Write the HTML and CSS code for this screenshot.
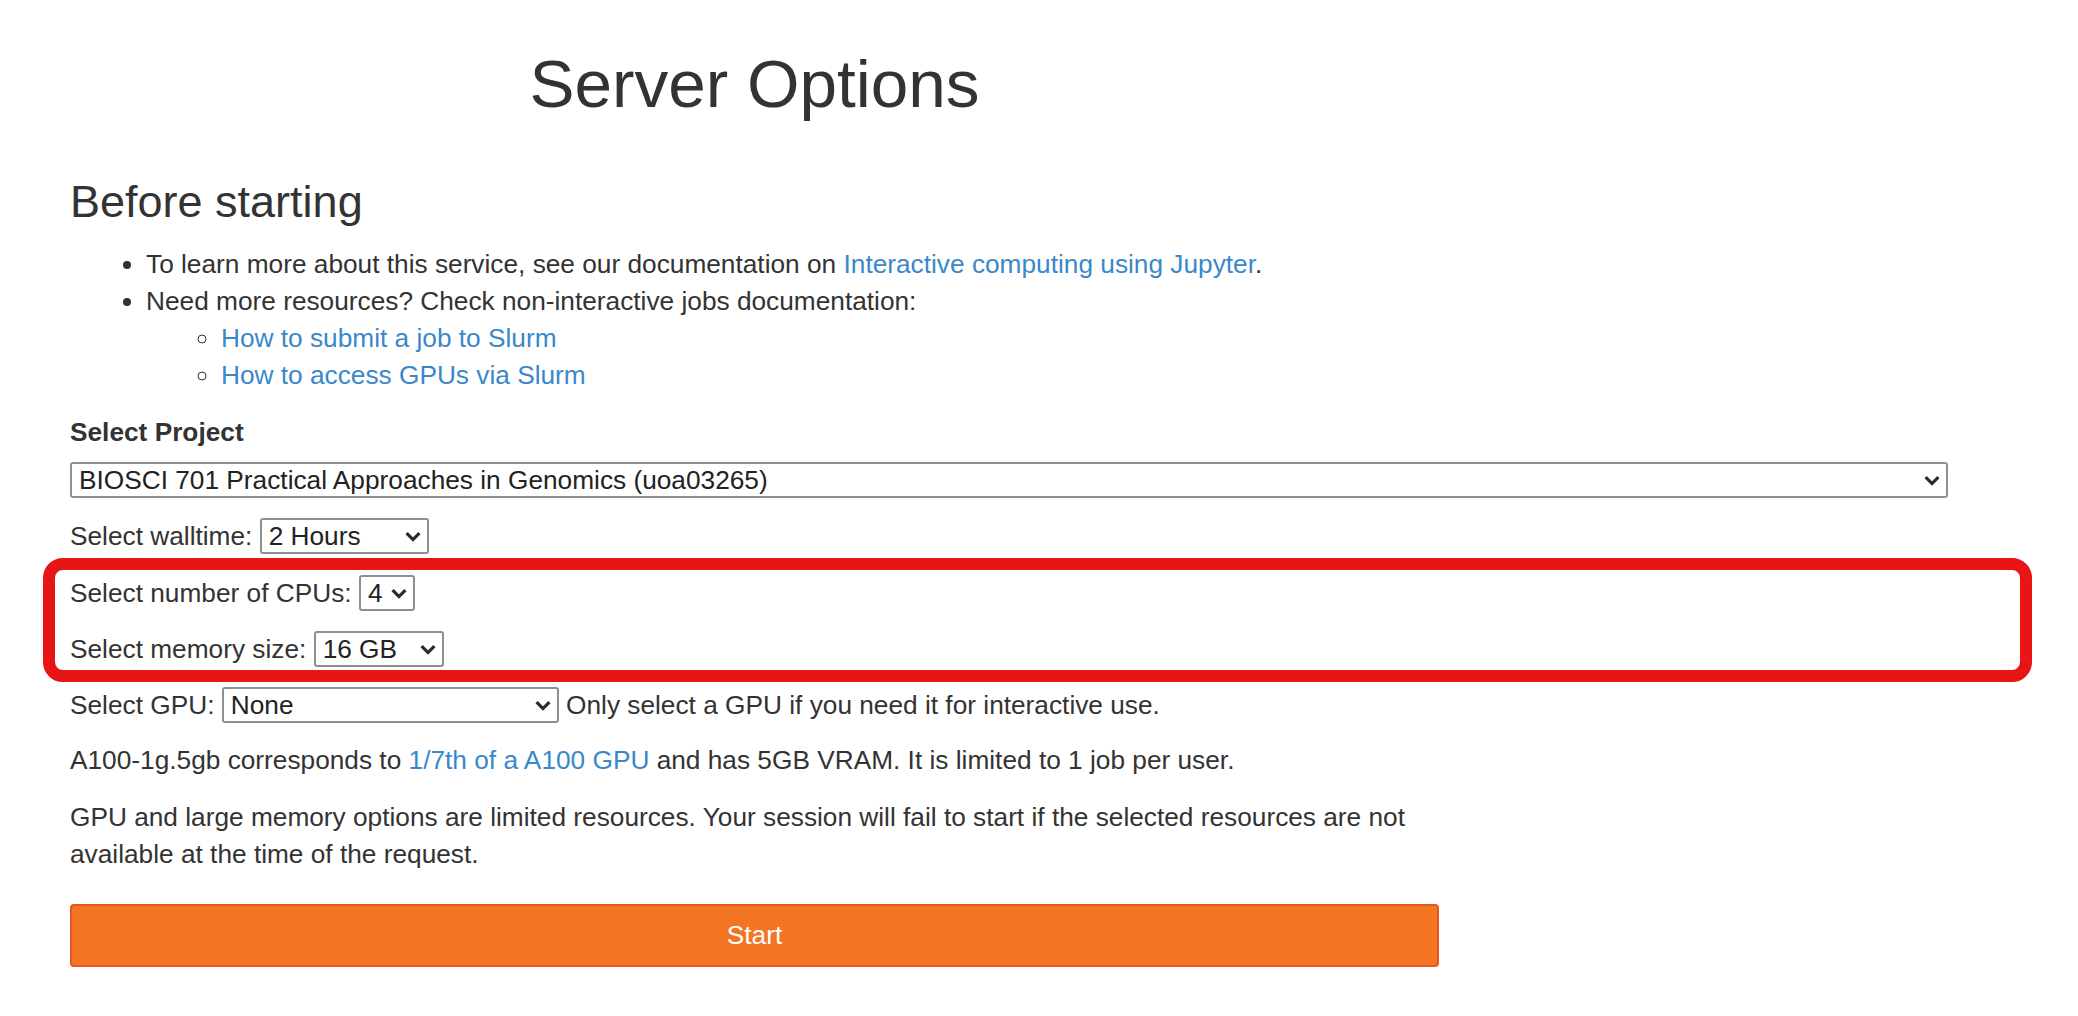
FILE: index.html
```html
<!DOCTYPE html>
<html lang="en">
<head>
<meta charset="utf-8">
<title>Server Options</title>
<link rel="stylesheet" href="styles.css">
</head>
<body>
<div class="page">
  <h1 class="title">Server Options</h1>
  <form class="spawn-form">
    <h3 class="section-title">Before starting</h3>
    <ul class="info-list">
      <li>To learn more about this service, see our documentation on <a href="#">Interactive computing using Jupyter</a>.</li>
      <li>Need more resources? Check non-interactive jobs documentation:
        <ul class="sub-list">
          <li><a href="#">How to submit a job to Slurm</a></li>
          <li><a href="#">How to access GPUs via Slurm</a></li>
        </ul>
      </li>
    </ul>

    <label class="project-label" for="project">Select Project</label>
    <div class="select-wrap sel-project">
      <select id="project"><option>BIOSCI 701 Practical Approaches in Genomics (uoa03265)</option></select>
      <svg class="chev" viewBox="0 0 16 11" width="16" height="11"><path d="M1.6 2.2 L8 8.6 L14.4 2.2"/></svg>
    </div>

    <div class="opt-row">
      <label for="walltime">Select walltime:</label>
      <span class="select-wrap sel-walltime">
        <select id="walltime"><option>2 Hours</option><option>4 Hours</option><option>8 Hours</option></select>
        <svg class="chev" viewBox="0 0 16 11" width="16" height="11"><path d="M1.6 2.2 L8 8.6 L14.4 2.2"/></svg>
      </span>
    </div>

    <div class="highlight-group">
      <div class="opt-row">
        <label for="cpus">Select number of CPUs:</label>
        <span class="select-wrap sel-cpu">
          <select id="cpus"><option>4</option><option>2</option><option>8</option></select>
          <svg class="chev" viewBox="0 0 16 11" width="16" height="11"><path d="M1.6 2.2 L8 8.6 L14.4 2.2"/></svg>
        </span>
      </div>
      <div class="opt-row">
        <label for="mem">Select memory size:</label>
        <span class="select-wrap sel-mem">
          <select id="mem"><option>16 GB</option><option>32 GB</option></select>
          <svg class="chev" viewBox="0 0 16 11" width="16" height="11"><path d="M1.6 2.2 L8 8.6 L14.4 2.2"/></svg>
        </span>
      </div>
      <div class="highlight-box"></div>
    </div>

    <div class="opt-row">
      <label for="gpu">Select GPU:</label>
      <span class="select-wrap sel-gpu">
        <select id="gpu"><option>None</option><option>A100-1g.5gb</option></select>
        <svg class="chev" viewBox="0 0 16 11" width="16" height="11"><path d="M1.6 2.2 L8 8.6 L14.4 2.2"/></svg>
      </span>
      <span class="hint">Only select a GPU if you need it for interactive use.</span>
    </div>

    <p class="note note-first">A100-1g.5gb corresponds to <a href="#">1/7th of a A100 GPU</a> and has 5GB VRAM. It is limited to 1 job per user.</p>
    <p class="note">GPU and large memory options are limited resources. Your session will fail to start if the selected resources are not available at the time of the request.</p>

    <button type="button" class="start-btn">Start</button>
  </form>
</div>
</body>
</html>
```

FILE: styles.css
```css
html, body {
  margin: 0;
  padding: 0;
  background: #ffffff;
}

body {
  font-family: "Liberation Sans", Arial, Helvetica, sans-serif;
  font-size: 26.25px;
  line-height: 37px;
  color: #333333;
}

.page {
  padding-left: 70px;
}

a {
  color: #3a88c9;
  text-decoration: none;
}

.title {
  width: 1369px;
  margin: 47px 0 0;
  text-align: center;
  font-size: 67.5px;
  line-height: 74px;
  font-weight: 500;
  color: #333333;
}

.spawn-form {
  width: 1369px;
  margin: 0;
}

.section-title {
  margin: 55.5px 0 0;
  font-size: 45px;
  line-height: 49.5px;
  font-weight: 500;
  color: #333333;
}

.info-list {
  margin: 19.6px 0 0;
  padding-left: 76px;
  list-style: disc;
}

.sub-list {
  margin: 0;
  padding-left: 75px;
  list-style: circle;
}

.project-label {
  display: block;
  margin-top: 20.5px;
  font-weight: bold;
  line-height: 37px;
}

.select-wrap {
  position: relative;
  display: inline-block;
  height: 36px;
  flex: none;
}

.select-wrap select {
  -webkit-appearance: none;
  appearance: none;
  display: block;
  width: 100%;
  height: 36px;
  box-sizing: border-box;
  margin: 0;
  padding: 0 30px 0 7px;
  border: 2px solid #8e8e8e;
  border-radius: 3px;
  background: #ffffff;
  color: #222222;
  font-family: inherit;
  font-size: 26.25px;
  line-height: 30px;
}

.chev {
  position: absolute;
  right: 8px;
  top: 13px;
  pointer-events: none;
}

.chev path {
  fill: none;
  stroke: #2b2b2b;
  stroke-width: 3.2;
  stroke-linejoin: miter;
  stroke-linecap: butt;
}

.sel-project {
  display: block;
  width: 1878px;
  margin-top: 10.9px;
}

.sel-walltime { width: 169px; }
.sel-cpu { width: 56px; }
.sel-mem { width: 130px; }
.sel-gpu { width: 337px; }

.opt-row {
  display: flex;
  align-items: center;
  height: 36px;
  margin-top: 20.3px;
  white-space: nowrap;
}

.opt-row label {
  line-height: 36px;
  margin-right: 7.3px;
}

.hint {
  margin-left: 7.3px;
  line-height: 36px;
}

.highlight-group {
  position: relative;
}

.highlight-box {
  position: absolute;
  left: -27px;
  top: -16.6px;
  width: 1989px;
  height: 124px;
  box-sizing: border-box;
  border: 12px solid #e81517;
  border-radius: 20px;
  pointer-events: none;
}

.note {
  margin: 20px 0 0;
  line-height: 37px;
}

.note-first {
  margin-top: 19.2px;
}

.start-btn {
  display: block;
  width: 1369px;
  height: 63px;
  margin-top: 30.6px;
  box-sizing: border-box;
  background: #f37524;
  border: 2px solid #e5561f;
  border-radius: 4px;
  color: #ffffff;
  font-family: inherit;
  font-size: 26.25px;
  line-height: 30px;
  text-align: center;
  cursor: pointer;
}
```
